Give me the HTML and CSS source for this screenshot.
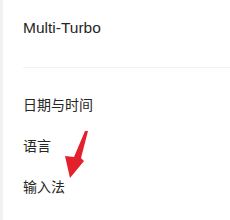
FILE: index.html
```html
<!DOCTYPE html>
<html lang="zh-CN">
<head>
<meta charset="utf-8">
<link rel="stylesheet" href="styles.css">
</head>
<body>
<div class="page">
  <div class="title">Multi-Turbo</div>
  <div class="divider"></div>
  <div class="item">日期与时间</div>
  <div class="item">语言</div>
  <div class="item">输入法</div>
  <svg class="arrow" width="230" height="220" viewBox="0 0 230 220">
    <polygon points="88,131 81,158 84,161 70,178 65,156 74,157 85,131" fill="#e3202b"/>
  </svg>
</div>
</body>
</html>
```
FILE: styles.css
```css
html, body {
  margin: 0;
  padding: 0;
  background: #ffffff;
}
.page {
  position: relative;
  width: 230px;
  height: 220px;
  border-left: 3px solid #f1f1f1;
  padding-left: 20px;
  box-sizing: border-box;
  overflow: hidden;
  font-family: "Noto Sans CJK SC", "Noto Sans", sans-serif;
  color: #262626;
}
.title {
  font-family: "Liberation Sans", "Noto Sans", sans-serif;
  font-size: 15.5px;
  line-height: 20px;
  padding-top: 18px;
  height: 20px;
}
.divider {
  margin-top: 29px;
  height: 1px;
  background: #f2f2f2;
}
.item {
  font-size: 14px;
  line-height: 20px;
  height: 41px;
}
.divider + .item {
  margin-top: 26px;
}
.arrow {
  position: absolute;
  left: -3px;
  top: 0;
}
```
